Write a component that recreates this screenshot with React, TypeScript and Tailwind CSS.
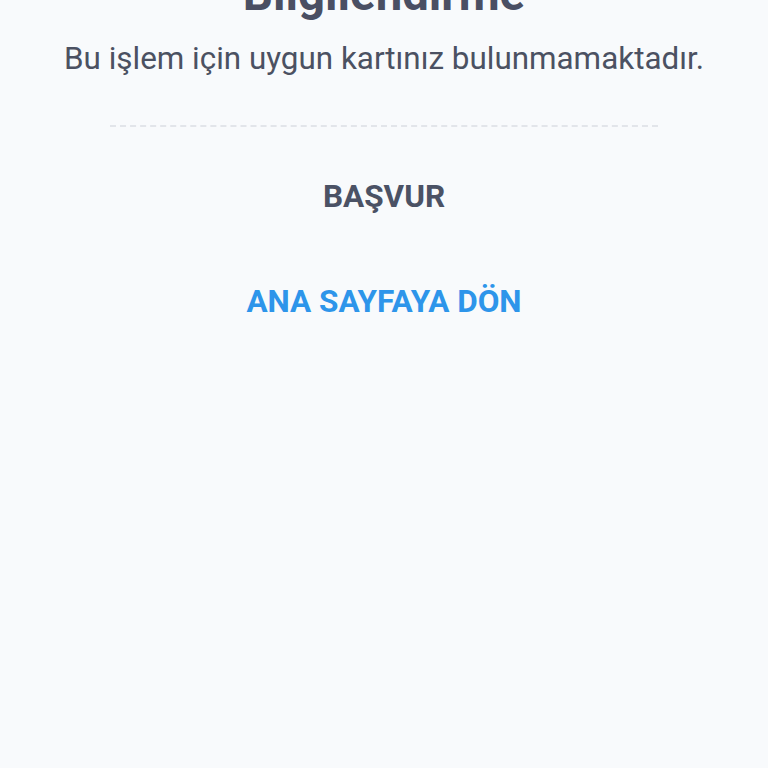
export default function App() {
  return (
    <div
      className="min-h-[768px] w-[768px] bg-[#f8fafc] flex flex-col items-center overflow-hidden"
      style={{ fontFamily: "Roboto, sans-serif" }}
    >
      <h1 className="mt-[-33px] text-[47.3px] leading-[55px] font-bold text-[#4a4f63] whitespace-nowrap">Bilgilendirme</h1>
      <p className="mt-[19px] text-[31.4px] leading-[36px] text-[#4b5162] whitespace-nowrap">
        Bu işlem için uygun kartınız bulunmamaktadır.
      </p>
      <div className="mt-[48px] w-[548px] border-t-2 border-dashed border-[#e2e5ea]" />
      <button className="mt-[52px] text-[31.5px] leading-[36px] font-bold text-[#4b5265]">BAŞVUR</button>
      <button className="mt-[69px] text-[31.5px] leading-[36px] font-bold text-[#2d95ea]">ANA SAYFAYA DÖN</button>
    </div>
  );
}
